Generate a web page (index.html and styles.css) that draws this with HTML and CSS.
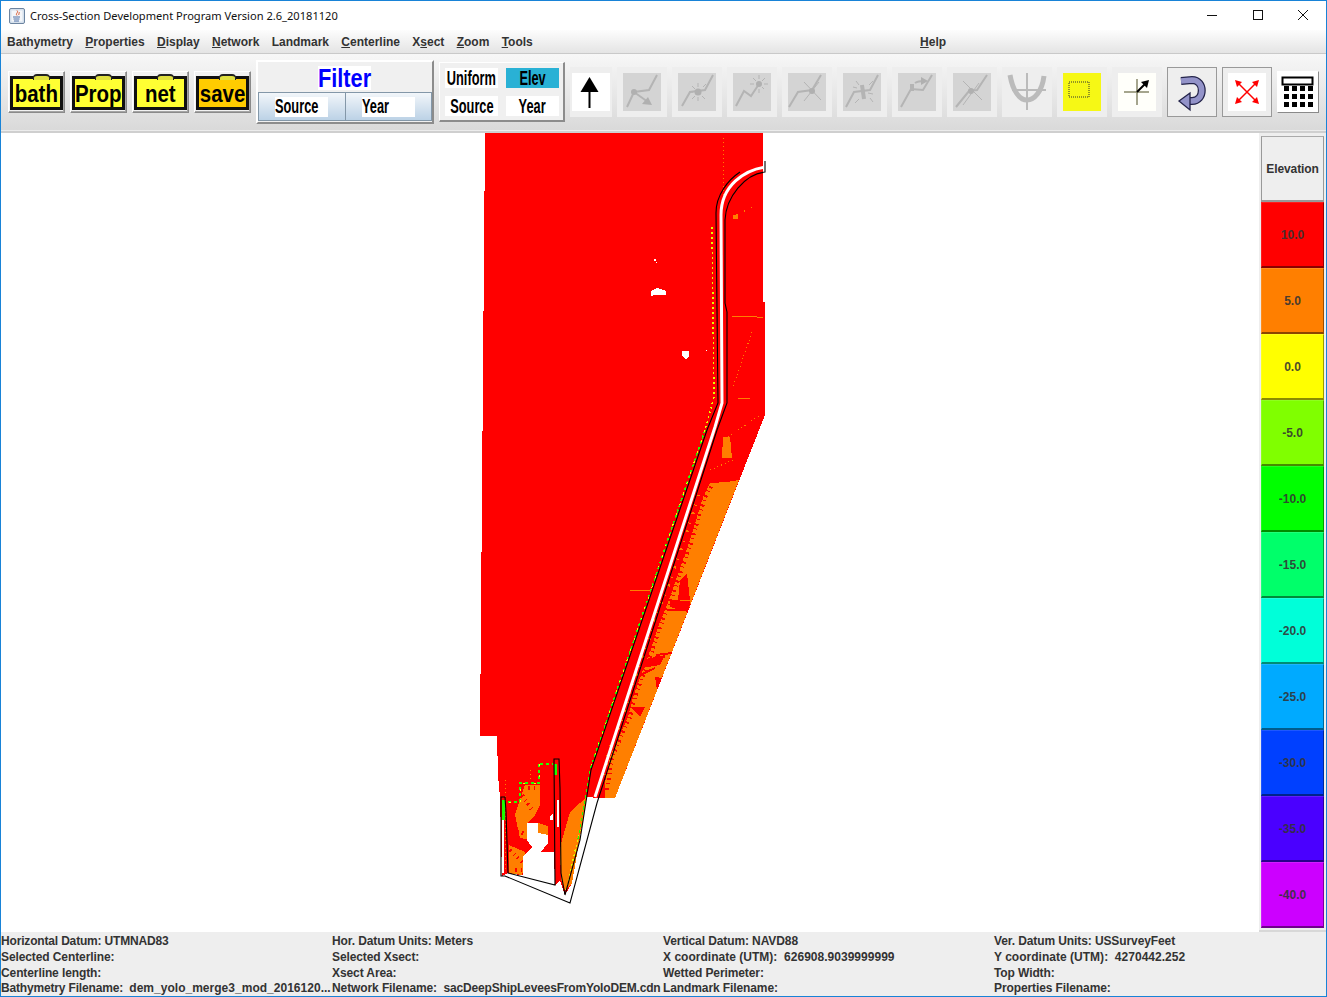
FILE: index.html
```html
<!DOCTYPE html>
<html lang="en">
<head>
<meta charset="utf-8">
<title>Cross-Section Development Program</title>
<link rel="stylesheet" href="styles.css">
</head>
<body>
<div class="window">
  <header class="titlebar">
    <svg class="appicon" viewBox="0 0 16 16" width="16" height="16">
      <rect x=".5" y=".5" width="15" height="15" rx="1.500" fill="#d5e0ec" stroke="#6c84a0"/>
      <rect x="2.500" y="2.500" width="11" height="11" fill="#f4f6f9"/>
      <path d="M8 2.500c2 2-2 3 0 5M10 4c1 1-1 2 0 3" fill="none" stroke="#d8542a"/>
      <path d="M4 9h7M4.500 11h6M5 13h5" stroke="#4c6fa5"/>
    </svg>
    <span class="title">Cross-Section Development Program Version 2.6_20181120</span>
    <div class="winctrls">
      <svg viewBox="0 0 10 10" width="10" height="10"><path d="M0 5.500h10" stroke="#111"/></svg>
      <svg viewBox="0 0 10 10" width="10" height="10"><rect x=".5" y=".5" width="9" height="9" fill="none" stroke="#111"/></svg>
      <svg viewBox="0 0 10 10" width="10" height="10"><path d="M0 0l10 10M10 0L0 10" stroke="#111"/></svg>
    </div>
  </header>

  <nav class="menubar">
    <span>Bathymetry</span>
    <span><u>P</u>roperties</span>
    <span><u>D</u>isplay</span>
    <span><u>N</u>etwork</span>
    <span>Landmark</span>
    <span><u>C</u>enterline</span>
    <span>X<u>s</u>ect</span>
    <span><u>Z</u>oom</span>
    <span><u>T</u>ools</span>
    <span class="help"><u>H</u>elp</span>
  </nav>

  <div class="toolbar">
    <button class="bag"><span class="bagbody"><b>bath</b></span></button>
    <button class="bag"><span class="bagbody"><b>Prop</b></span></button>
    <button class="bag"><span class="bagbody"><b>net</b></span></button>
    <button class="bag bag-save"><span class="bagbody"><b>save</b></span></button>

    <div class="filter">
      <div class="filter-title"><span>Filter</span></div>
      <div class="filter-tabs">
        <div class="tab"><div class="label label-left"><span>Source</span></div></div>
        <div class="tab"><div class="label label-left"><span>Year</span></div></div>
      </div>
    </div>

    <div class="modes">
      <div class="label"><span>Uniform</span></div>
      <div class="label label-on"><span>Elev</span></div>
      <div class="label"><span>Source</span></div>
      <div class="label"><span>Year</span></div>
    </div>

    <button class="tool tool-arrow">
      <svg class="face" viewBox="0 0 38 38"><rect width="38" height="38" fill="#fff"/><path d="M17.500 4l9 15H8.500z" fill="#000"/><path d="M17.500 18v17" stroke="#000" stroke-width="2"/></svg>
    </button>

    <button class="tool">
      <svg class="face" viewBox="0 0 38 38"><rect width="38" height="38" fill="#d4d4d4"/><g class="dis"><path d="M4 34l7-15 15-2 8-15"/><path d="M11 19l14 10"/></g><circle cx="11" cy="19" r="3" fill="#b0b0b0"/><path d="M29 32l-10-1 6-7z" fill="#b0b0b0"/></svg>
    </button>
    <button class="tool">
      <svg class="face" viewBox="0 0 38 38"><rect width="38" height="38" fill="#d4d4d4"/><g class="dis"><path d="M4 33l8-14 15-2 8-15"/></g><circle cx="20" cy="19" r="3.500" fill="#b0b0b0"/><g class="dis thin"><path d="M20 10v4M20 24v4M11 19h4M25 14l3-3M14 13l3 3M14 26l3-3M24 23l3 3"/></g></svg>
    </button>
    <button class="tool">
      <svg class="face" viewBox="0 0 38 38"><rect width="38" height="38" fill="#d4d4d4"/><g class="dis"><path d="M3 33l8-15 7 5 8-12"/></g><circle cx="26" cy="11" r="3" fill="#b0b0b0"/><g class="dis thin"><path d="M26 2v4M26 16v4M17 11h4M31 11h4M20 5l3 3M32 5l-3 3M31 16l-2-2"/></g></svg>
    </button>
    <button class="tool">
      <svg class="face" viewBox="0 0 38 38"><rect width="38" height="38" fill="#d4d4d4"/><g class="dis"><path d="M1 34l9-15 14-2 9-15"/></g><g class="dis thin"><path d="M16 9l17 18M16 28l15-19"/></g><circle cx="24" cy="18" r="3" fill="#b0b0b0"/></svg>
    </button>
    <button class="tool">
      <svg class="face" viewBox="0 0 38 38"><rect width="38" height="38" fill="#d4d4d4"/><g class="dis"><path d="M3 34l8-15 16-2 8-15"/><path class="heavy" d="M19 12l2 14"/></g><g class="dis thin"><path d="M13 8l3 4M30 8l-4 4M10 14l4 1M27 25l3 4M12 30l4-4M25 20l5 1"/></g></svg>
    </button>
    <button class="tool">
      <svg class="face" viewBox="0 0 38 38"><rect width="38" height="38" fill="#d4d4d4"/><g class="dis"><path d="M3 34l10-18 12 1 9-15"/><path class="heavy" d="M14 11v7"/><path d="M17 10c3-2 6-2 9-2"/></g><path d="M30 8l-7 4V4z" fill="#b0b0b0"/></svg>
    </button>
    <button class="tool">
      <svg class="face" viewBox="0 0 38 38"><rect width="38" height="38" fill="#d4d4d4"/><g class="dis"><path d="M3 34l13-16 8-1 10-15"/></g><g class="dis thin"><path d="M10 8l19 19M10 32l16-22"/></g><circle cx="18" cy="18" r="3" fill="#b0b0b0"/></svg>
    </button>
    <button class="tool">
      <svg class="face-full" viewBox="0 0 50 50"><g class="dis trident"><path d="M25 6v37M10 23h34"/><path class="bowl" d="M8 8c3 17 10 25 17 25s15-8 17-24"/></g></svg>
    </button>
    <button class="tool">
      <svg class="face" viewBox="0 0 38 38"><rect width="38" height="38" fill="#f6f815"/><rect x="6" y="9" width="20" height="15" fill="none" stroke="#333" stroke-dasharray="1 1"/></svg>
    </button>
    <button class="tool">
      <svg class="face" viewBox="0 0 38 38"><rect width="38" height="38" fill="#fffffa"/><path d="M6 19h25M19 6v26" stroke="#88886a" stroke-width="1.500"/><path d="M19 19l9-9" stroke="#000" stroke-width="2"/><path d="M31 7l-8 2 6 6z" fill="#000"/></svg>
    </button>
    <button class="tool tool-framed">
      <svg class="face-full" viewBox="0 0 48 48"><path d="M13 13l11-1c13 0 13 21 0 21h-4" fill="none" stroke="#23234a" stroke-width="8"/><path d="M13 13l11-1c13 0 13 21 0 21h-4" fill="none" stroke="#9393c9" stroke-width="5.500"/><path d="M11 33l11-8v17z" fill="#9393c9" stroke="#23234a" stroke-width="1.300"/></svg>
    </button>
    <button class="tool tool-framed">
      <svg class="face" viewBox="0 0 38 38"><rect width="38" height="38" fill="#fff"/><path d="M9 9l20 20M29 9L9 29" stroke="#f00" stroke-width="1.500"/><path d="M7 7l7 2-5 5zM31 7l-7 2 5 5zM7 31l7-2-5-5zM31 31l-7-2 5-5z" fill="#f00"/></svg>
    </button>
    <button class="tool tool-calc">
      <svg class="calc" viewBox="0 0 42 42">
        <rect x="5.500" y="6.500" width="30" height="7" fill="#fff" stroke="#000" stroke-width="2"/>
        <g fill="#000"><rect x="7" y="15" width="5" height="5"/><rect x="15" y="15" width="5" height="5"/><rect x="23" y="15" width="5" height="5"/><rect x="31" y="15" width="5" height="5"/><rect x="7" y="23" width="5" height="5"/><rect x="15" y="23" width="5" height="5"/><rect x="23" y="23" width="5" height="5"/><rect x="31" y="23" width="5" height="5"/><rect x="7" y="31" width="5" height="5"/><rect x="15" y="31" width="5" height="5"/><rect x="23" y="31" width="5" height="5"/><rect x="31" y="31" width="5" height="5"/></g>
      </svg>
    </button>
  </div>

  <main class="main">
    <div class="canvas">
      <svg class="map" viewBox="1 133 1258 799" width="1258" height="799">
        <path class="red" d="M485 133H763V302H765V415L739 481 615 798H598L587 797 572 883 565 895 560 880 555 885 508 873 502 876 500 797 498 775 497 736H480Z"/>
        <path class="orange" d="M739 480L615 798H605V783L610 757 628 717 633 697 643 670 653 643 658 627 670 597 690 540 703 497 710 483 727 482Z"/>
        <path class="jag-red" d="M607 790L612 757 630 717 635 697 645 670 655 643 660 627 672 597 692 540 705 497 712 485"/>
        <path class="jag-orange" d="M604 775L609 750 625 712 630 692 640 665 650 638 655 620 667 590 686 535 699 495"/>
        <path class="red" d="M655 677L662 678 657 690ZM670 600L690 601 688 612 670 607ZM687 573L690 600 678 600 680 580ZM630 707L645 707 640 717ZM640 660L665 655 660 665 642 668Z"/>
        <path class="orange" d="M560 850L562 840 570 812 580 803 587 797 572 883 565 890 561 880Z"/>
        <path class="orange" d="M509 845L525 852V863L522 875 509 873ZM525 785H540V805L535 815 527 823 530 840 520 838 515 815 520 800ZM538 823L548 826V843L541 852 533 847 530 830ZM723 437L730 437 732 458H722ZM733 215L738 214V219H733Z"/>
        <path class="jag-red" d="M510 850L525 865M512 830L528 835M522 795L532 810M528 788H538M515 870H522M535 835L545 845"/>
        <path class="white" d="M527 823H538V833L548 835V843L541 852H554L555 885 510 874 523 875V857L532 847 527 840ZM651 291L657 288 666 291V295L655 295 651 296ZM682 351H689V356L686 360 684 358 682 355ZM550 816L553 814V820H550ZM654 259h2v2h-2zM656 262h1v1h-1zM706 350h1v1h-1z"/>
        <path class="line-white" d="M503 805V873M558 800V827"/>
        <path class="line-orange" d="M732 316H751L763 318M630 590H650M738 398H750"/>
        <path class="dot-orange" d="M723 138V203M752 332L733 387M737 215L752 207M728 437L760 415M710 470L733 460M505 780V870M530 770V780M520 790V810"/>
        <path class="line-red" d="M670 605H690M668 610H688M655 657H665M656 655L672 653M640 675L655 668"/>
        <path class="dot-yellow" d="M712 227L714 397 705 430M580 830L566 890"/>
        <path class="dot-green" d="M705 430L590 770 578 840M540 764H553M539 764V783H520V802H506"/>
        <path class="dot-yellow2" d="M705 430L590 770M539 764V783H520V802H506"/>
        <path class="green-bar" d="M503 800V820M555 764V775"/>
        <path class="channel" d="M765 167C745 170 721 185 721 215L722 403 715 427 595 797"/>
        <path class="outline" d="M740 172C728 180 716 195 716 213L717 310 718 403 707 430 591 770 580 840 565 895 561 873 560 788 559 759H554L555 885 508 873 506 812 505 797H501V876H505L570 903 597 803 717 430 727 403 727 312 725 303V220C726 197 745 174 765 172V161"/>
      </svg>
    </div>
    <aside class="legend">
      <div class="legend-head">Elevation</div>
      <div class="swatch c1">10.0</div>
      <div class="swatch c2">5.0</div>
      <div class="swatch c3">0.0</div>
      <div class="swatch c4">-5.0</div>
      <div class="swatch c5">-10.0</div>
      <div class="swatch c6">-15.0</div>
      <div class="swatch c7">-20.0</div>
      <div class="swatch c8">-25.0</div>
      <div class="swatch c9">-30.0</div>
      <div class="swatch c10">-35.0</div>
      <div class="swatch c11">-40.0</div>
    </aside>
  </main>

  <footer class="status">
    <span class="tight">Horizontal Datum: UTMNAD83</span><span>Hor. Datum Units: Meters</span><span>Vertical Datum: NAVD88</span><span>Ver. Datum Units: USSurveyFeet</span>
    <span>Selected Centerline:</span><span>Selected Xsect:</span><span class="wide">X coordinate (UTM):  626908.9039999999</span><span class="wide">Y coordinate (UTM):  4270442.252</span>
    <span>Centerline length:</span><span>Xsect Area:</span><span>Wetted Perimeter:</span><span>Top Width:</span>
    <span class="tight">Bathymetry Filename:  <span class="wide">dem_yolo_merge3_mod_2016120...</span></span><span>Network Filename:  <span class="tight">sacDeepShipLeveesFromYoloDEM.cdn</span></span><span>Landmark Filename:</span><span>Properties Filename:</span>
  </footer>
</div>
</body>
</html>
```
FILE: styles.css
```css
* { box-sizing: border-box; }
html, body { margin: 0; padding: 0; background: #fff; }
body { font-family: "Liberation Sans", Arial, sans-serif; overflow: hidden; }

.window {
  width: 1327px;
  height: 997px;
  border: 1px solid #1883d7;
  display: flex;
  flex-direction: column;
  background: #eee;
}

.titlebar {
  height: 29px;
  flex: none;
  background: #fff;
  display: flex;
  align-items: center;
  padding-left: 8px;
}
.appicon { margin-right: 5px; margin-top: 1px; }
.title { font-family: "Noto Sans", sans-serif; font-size: 11.1px; color: #111; }
.winctrls { margin-left: auto; display: flex; gap: 35.5px; padding-right: 18px; margin-top: -1px; }

.menubar {
  height: 24px;
  flex: none;
  display: flex;
  align-items: center;
  gap: 12.3px;
  padding-left: 6px;
  background: linear-gradient(#fdfdfd, #e4e4e4);
  border-bottom: 1px solid #c9c9c9;
  font-size: 12px;
  font-weight: bold;
  color: #333;
}
.help { margin-left: 375px; }

.toolbar {
  height: 79px;
  flex: none;
  display: flex;
  align-items: center;
  gap: 5px;
  padding: 0 0 1px 7px;
  background: linear-gradient(#f7f7f7, #d9d9d9);
  border-bottom: 2px solid #cfcfcf;
  box-shadow: inset 0 -1px 0 #ececec;
}
button { font: inherit; padding: 0; margin: 0; cursor: default; }

.bag {
  width: 57px;
  height: 42px;
  position: relative;
  background: #f2f2f2;
  border: 1px solid;
  border-color: #fff #8a8a8a #8a8a8a #fff;
  box-shadow: inset -1px -1px 0 #a5a5a5;
  display: flex;
  align-items: flex-end;
  justify-content: center;
  padding-bottom: 2px;
}
.bag::before {
  content: "";
  position: absolute;
  left: 24px;
  top: 2px;
  width: 15px;
  height: 4px;
  background: #e0e040;
  border: 1px solid #222;
  border-top-width: 2px;
  border-bottom: 0;
  border-radius: 4px 4px 0 0;
}
.bagbody {
  width: 53px;
  height: 34px;
  background: #ffff33;
  border: 3px solid #111;
  display: flex;
  align-items: center;
  justify-content: center;
  padding-top: 2px;
}
.bag-save .bagbody { background: #ffcc00; }
.bagbody b {
  display: inline-block;
  font-size: 23px;
  line-height: 24px;
  color: #000;
  transform: scaleX(.89);
}

.filter {
  width: 178px;
  height: 64px;
  display: flex;
  flex-direction: column;
  background: #f0f0f0;
  border: 2px solid;
  border-color: #fff #8c8c8c #8c8c8c #fff;
  padding-bottom: 1px;
}
.filter-title {
  height: 30px;
  flex: none;
  display: flex;
  align-items: center;
  justify-content: center;
  padding-top: 1px;
}
.filter-title span {
  display: inline-block;
  font-size: 25px;
  font-weight: bold;
  color: #0000ff;
  background: #fff;
  line-height: 24px;
  transform: scaleX(.87);
}
.filter-tabs { display: flex; flex: 1; }
.tab {
  flex: 1;
  border: 1px solid #8397a8;
  background: linear-gradient(#f2f6fa, #bcd2e6);
  display: flex;
  align-items: center;
  justify-content: center;
}
.tab + .tab { border-left-width: 0; }
.label {
  width: 53px;
  height: 20px;
  background: #fff;
  display: flex;
  align-items: center;
  justify-content: center;
  overflow: hidden;
}
.label span {
  display: inline-block;
  font-size: 20px;
  font-weight: bold;
  color: #000;
  transform: scaleX(.64);
  white-space: nowrap;
}
.label-left { justify-content: flex-start; }
.label-left span { transform-origin: 0 50%; }
.label-on { background: #29b1d5; }

.modes {
  width: 126px;
  height: 60px;
  display: grid;
  grid-template-columns: 53px 53px;
  grid-auto-rows: 20px;
  gap: 8px;
  padding: 5px 0 0 5px;
  background: #f0f0f0;
  border: 1px solid;
  border-width: 1px 2px 2px 1px;
  border-color: #fff #8c8c8c #8c8c8c #fff;
}

.tool {
  width: 50px;
  height: 50px;
  flex: none;
  background: #eee;
  border: 0;
  display: flex;
  align-items: center;
  justify-content: center;
}
.tool-arrow { width: 42px; }
.tool-framed { border: 1px solid #999; }
.tool-calc {
  width: 42px;
  height: 42px;
  background: #fff;
  border: 1px solid;
  border-color: #fff #8a8a8a #8a8a8a #fff;
}
.face { width: 38px; height: 38px; display: block; }
.face-full { width: 100%; height: 100%; display: block; }
.calc { width: 42px; height: 42px; display: block; flex: none; }
.dis path { fill: none; stroke: #b4b4b4; stroke-width: 2; }
.dis.thin path { stroke-width: 1; }
.dis path.heavy { stroke-width: 4; }
.dis.trident path { stroke: #bbb; stroke-width: 2; }
.dis.trident path.bowl { stroke-width: 5; }

.main { flex: 1; display: flex; min-height: 0; }
.canvas { width: 1258px; flex: none; background: #fff; overflow: hidden; }
.map { display: block; shape-rendering: crispEdges; }
.red { fill: #ff0000; }
.orange { fill: #ff7f00; }
.white { fill: #fff; }
.map path[class^="line"], .map path[class^="dot"], .map path[class^="jag"], .channel, .outline, .green-bar { fill: none; }
.line-white { stroke: #fff; stroke-width: 2; }
.line-orange { stroke: #ff7f00; stroke-width: 1; }
.line-red { stroke: #f00; stroke-width: 2; }
.jag-red { stroke: #f00; stroke-width: 4; stroke-dasharray: 2 4 1 3; }
.jag-orange { stroke: #ff7f00; stroke-width: 3; stroke-dasharray: 1 9 2 7; }
.dot-orange { stroke: #ff7f00; stroke-width: 1; stroke-dasharray: 1 3; }
.dot-yellow { stroke: #dfff00; stroke-width: 1.500; stroke-dasharray: 2 3; }
.dot-green { stroke: #22ff00; stroke-width: 1.500; stroke-dasharray: 3 3; }
.dot-yellow2 { stroke: #ffff00; stroke-width: 1; stroke-dasharray: 2 9; }
.green-bar { stroke: #1aff00; stroke-width: 3; }
.channel { stroke: #fff; stroke-width: 3; shape-rendering: auto; }
.outline { stroke: #000; stroke-width: 1.100; shape-rendering: auto; }

.legend {
  flex: 1;
  padding: 3px 2px 0 2px;
  background: #eeeeee;
  border-bottom: 2px solid #d8d8d8;
}
.legend-head {
  height: 66px;
  background: #eee;
  border: 1px solid #999;
  border-bottom-width: 2px;
  border-top-color: #aaa;
  font-size: 12px;
  font-weight: bold;
  letter-spacing: -.1px;
  color: #333;
  display: flex;
  align-items: center;
  justify-content: center;
}
.swatch {
  height: 66px;
  border: 1px solid rgba(255, 255, 255, .12);
  border-bottom: 2px solid rgba(0, 0, 0, .45);
  border-right-color: rgba(0, 0, 0, .4);
  font-size: 12px;
  font-weight: bold;
  color: rgba(51, 51, 51, .9);
  display: flex;
  align-items: center;
  justify-content: center;
}
.c1 { background: #ff0000; }
.c2 { background: #ff7f00; }
.c3 { background: #ffff00; }
.c4 { background: #80ff00; }
.c5 { background: #00ff00; }
.c6 { background: #00ff6a; }
.c7 { background: #00ffd9; }
.c8 { background: #00aaff; }
.c9 { background: #0040ff; }
.c10 { background: #4a00ff; }
.c11 { background: #cc00ff; }

.status {
  height: 64px;
  flex: none;
  display: grid;
  grid-template-columns: repeat(4, 331px);
  grid-auto-rows: 15.75px;
  padding-top: 1px;
  background: #eeeeee;
  font-size: 12px;
  font-weight: bold;
  color: #333;
  line-height: 16px;
  letter-spacing: -.1px;
}
.status span { white-space: pre; }
.status .tight { letter-spacing: -.17px; }
.status .wide { letter-spacing: .02px; }
```
